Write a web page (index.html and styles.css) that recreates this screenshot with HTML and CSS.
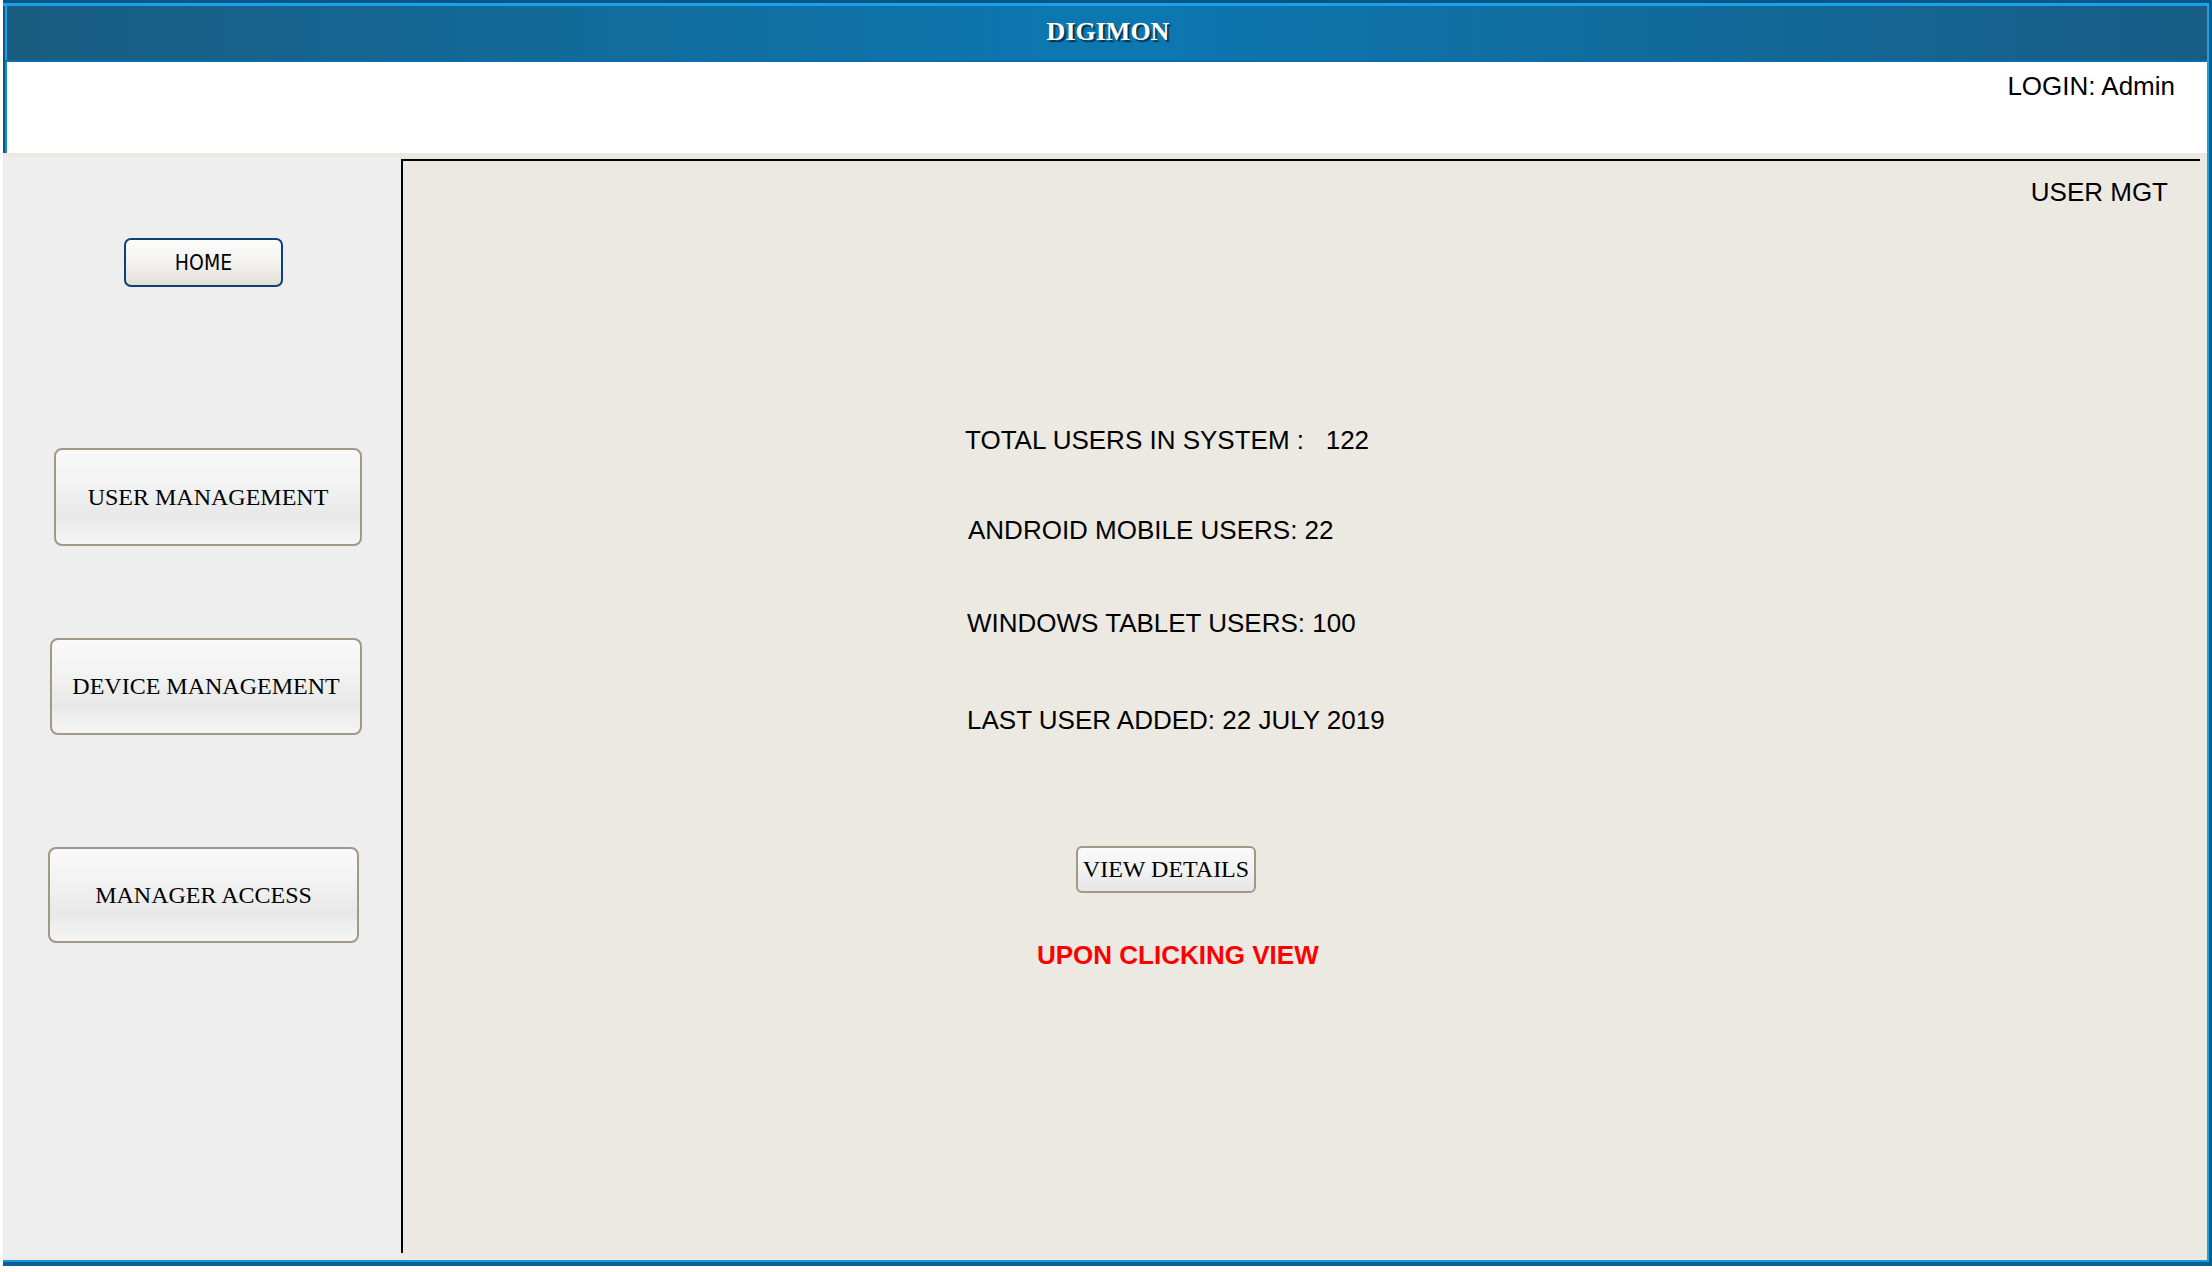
FILE: index.html
```html
<!DOCTYPE html>
<html lang="en">
<head>
<meta charset="utf-8">
<title>DIGIMON</title>
<link rel="stylesheet" href="styles.css">
</head>
<body>
<div class="frame">
  <div class="frame-in">
    <div class="top">
      <header class="header"><span class="brand">DIGIMON</span></header>
      <div class="userbar"><span class="login">LOGIN: Admin</span></div>
    </div>
    <div class="content">
      <nav class="sidebar">
        <button class="btn-home">HOME</button>
        <button class="nav-btn nav-user">USER MANAGEMENT</button>
        <button class="nav-btn nav-device">DEVICE MANAGEMENT</button>
        <button class="nav-btn nav-manager">MANAGER ACCESS</button>
      </nav>
      <main class="main">
        <div class="page-title">USER MGT</div>
        <div class="stats">
          <div class="stat stat-total">TOTAL USERS IN SYSTEM :   122</div>
          <div class="stat stat-android">ANDROID MOBILE USERS: 22</div>
          <div class="stat stat-windows">WINDOWS TABLET USERS: 100</div>
          <div class="stat stat-last">LAST USER ADDED: 22 JULY 2019</div>
        </div>
        <button class="btn-view">VIEW DETAILS</button>
        <div class="note">UPON CLICKING VIEW</div>
      </main>
    </div>
  </div>
</div>
</body>
</html>
```
FILE: styles.css
```css
html, body {
  margin: 0;
  padding: 0;
  background: #ffffff;
}

.frame {
  margin-left: 3px;
  width: 2209px;
  height: 1266px;
  box-sizing: border-box;
  border-top: 3px solid #0a5786;
  border-right: 3px solid #0b5a8c;
  border-bottom: 4px solid #0b5f93;
  box-shadow: 5px 6px 0 #cdcdcd;
}

.frame-in {
  height: 100%;
  box-sizing: border-box;
  border-top: 3px solid #19a2ea;
  border-right: 2px solid #19a2ea;
  border-bottom: 2px solid #1399df;
  display: flex;
  flex-direction: column;
}

.top {
  border-left: 2px solid #0a5786;
}

.header {
  height: 54px;
  border-bottom: 2px solid #0a6ead;
  background: linear-gradient(to right, #195c80 0%, #0c78b2 50%, #175d85 100%);
  box-shadow: inset 2px 0 0 #19a2ea;
  display: flex;
  align-items: center;
  justify-content: center;
}

.brand {
  font-family: "Liberation Serif", "Times New Roman", serif;
  font-weight: bold;
  font-size: 26px;
  color: #ffffff;
  text-shadow: 2px 2px 1px #0a2f4a;
  margin-left: 4px;
  margin-bottom: 2px;
}

.userbar {
  height: 91px;
  background: #ffffff;
  box-shadow: inset 2px 0 0 #1488cf;
  display: flex;
  justify-content: flex-end;
  align-items: flex-start;
  padding-top: 9px;
  padding-right: 32px;
  box-sizing: border-box;
}

.login {
  font-family: "Liberation Sans", Arial, sans-serif;
  font-size: 26px;
  line-height: 30px;
  color: #000;
}

.content {
  flex: 1;
  display: flex;
  background: #ece9e3;
  min-height: 0;
}

.sidebar {
  width: 398px;
  margin-top: 4px;
  margin-bottom: 2px;
  background: #eeeeee;
  display: flex;
  flex-direction: column;
  align-items: flex-start;
}

.btn-home {
  margin-top: 81px;
  margin-left: 121px;
  width: 159px;
  height: 49px;
  border: 2px solid #0d3f78;
  border-radius: 7px;
  background: linear-gradient(to bottom, #fbfbfa 0%, #f3f2ef 50%, #e2dfd8 100%);
  font-family: "DejaVu Sans Condensed", "DejaVu Sans", sans-serif;
  font-stretch: condensed;
  font-size: 21px;
  color: #000;
  padding: 0;
}

.nav-btn {
  border: 2px solid #a39786;
  border-radius: 8px;
  background: linear-gradient(to bottom, #f9f9f9 0%, #f3f3f3 35%, #e8e8e8 70%, #f5f5f5 100%);
  font-family: "Liberation Serif", "Times New Roman", serif;
  font-size: 24px;
  color: #000;
  padding: 0;
}

.nav-user {
  margin-top: 161px;
  margin-left: 51px;
  width: 308px;
  height: 98px;
}

.nav-device {
  margin-top: 92px;
  margin-left: 47px;
  width: 312px;
  height: 97px;
}

.nav-manager {
  margin-top: 112px;
  margin-left: 45px;
  width: 311px;
  height: 96px;
}

.main {
  flex: 1;
  margin-top: 6px;
  margin-bottom: 7px;
  margin-right: 7px;
  border-top: 2px solid #000;
  border-left: 2px solid #000;
  display: flex;
  flex-direction: column;
  align-items: flex-start;
  font-family: "Liberation Sans", Arial, sans-serif;
  color: #000;
}

.page-title {
  align-self: flex-end;
  margin-top: 16px;
  margin-right: 32px;
  font-size: 26px;
  line-height: 30px;
}

.stats {
  margin-top: 218px;
  margin-left: 562px;
  display: flex;
  flex-direction: column;
}

.stat {
  font-size: 26px;
  line-height: 30px;
  white-space: pre;
}

.stat-android {
  margin-top: 60px;
  margin-left: 3px;
}

.stat-windows {
  margin-top: 63px;
  margin-left: 2px;
}

.stat-last {
  margin-top: 67px;
  margin-left: 2px;
}

.btn-view {
  margin-top: 111px;
  margin-left: 673px;
  width: 180px;
  height: 47px;
  border: 2px solid #a39786;
  border-radius: 6px;
  background: linear-gradient(to bottom, #fafafa 0%, #f2f2f2 50%, #e6e6e6 100%);
  font-family: "Liberation Serif", "Times New Roman", serif;
  font-size: 24px;
  color: #000;
  padding: 0;
}

.note {
  margin-top: 47px;
  margin-left: 634px;
  font-size: 26px;
  line-height: 30px;
  font-weight: bold;
  color: #ff0000;
}
```
